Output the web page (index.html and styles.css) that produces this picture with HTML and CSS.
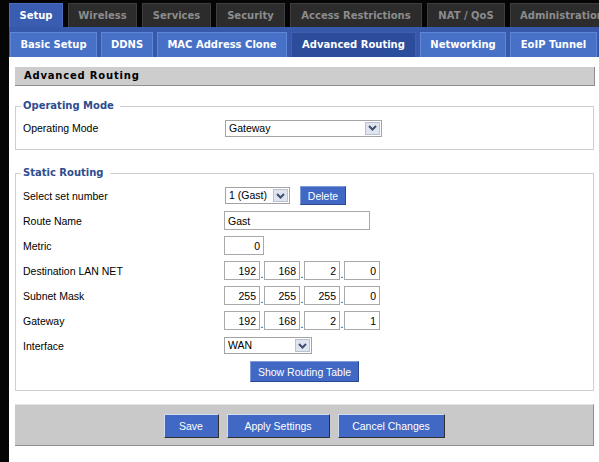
FILE: index.html
```html
<!DOCTYPE html>
<html>
<head>
<meta charset="utf-8">
<title>Advanced Routing</title>
<link rel="stylesheet" href="styles.css">
</head>
<body>
<div class="page">
  <nav class="tabs">
    <div class="tab active">Setup</div>
    <div class="tab">Wireless</div>
    <div class="tab">Services</div>
    <div class="tab">Security</div>
    <div class="tab">Access Restrictions</div>
    <div class="tab">NAT / QoS</div>
    <div class="tab">Administration</div>
  </nav>
  <nav class="subtabs">
    <div class="subtab">Basic Setup</div>
    <div class="subtab">DDNS</div>
    <div class="subtab">MAC Address Clone</div>
    <div class="subtab current">Advanced Routing</div>
    <div class="subtab">Networking</div>
    <div class="subtab">EoIP Tunnel</div>
  </nav>
  <main class="content">
    <div class="pagehead">Advanced Routing</div>

    <fieldset class="group group-mode">
      <legend>Operating Mode</legend>
      <div class="row">
        <div class="label">Operating Mode</div>
        <div class="field">
          <div class="select sel-mode"><span class="sel-text">Gateway</span><span class="sel-btn"><svg width="9" height="6" viewBox="0 0 9 6"><path d="M1 1 L4.5 4.5 L8 1" fill="none" stroke="#3d4f72" stroke-width="2"/></svg></span></div>
        </div>
      </div>
    </fieldset>

    <fieldset class="group group-static">
      <legend>Static Routing</legend>
      <div class="row">
        <div class="label">Select set number</div>
        <div class="field">
          <div class="select sel-set"><span class="sel-text">1 (Gast)</span><span class="sel-btn"><svg width="9" height="6" viewBox="0 0 9 6"><path d="M1 1 L4.5 4.5 L8 1" fill="none" stroke="#3d4f72" stroke-width="2"/></svg></span></div>
          <button class="btn btn-delete" type="button">Delete</button>
        </div>
      </div>
      <div class="row">
        <div class="label">Route Name</div>
        <div class="field"><input class="inp inp-name" type="text" value="Gast"></div>
      </div>
      <div class="row">
        <div class="label">Metric</div>
        <div class="field"><input class="inp inp-num inp-metric" type="text" value="0"></div>
      </div>
      <div class="row">
        <div class="label">Destination LAN NET</div>
        <div class="field ip">
          <input class="inp inp-num inp-ip" type="text" value="192"><span class="dot">.</span><input class="inp inp-num inp-ip" type="text" value="168"><span class="dot">.</span><input class="inp inp-num inp-ip" type="text" value="2"><span class="dot">.</span><input class="inp inp-num inp-ip" type="text" value="0">
        </div>
      </div>
      <div class="row">
        <div class="label">Subnet Mask</div>
        <div class="field ip">
          <input class="inp inp-num inp-ip" type="text" value="255"><span class="dot">.</span><input class="inp inp-num inp-ip" type="text" value="255"><span class="dot">.</span><input class="inp inp-num inp-ip" type="text" value="255"><span class="dot">.</span><input class="inp inp-num inp-ip" type="text" value="0">
        </div>
      </div>
      <div class="row">
        <div class="label">Gateway</div>
        <div class="field ip">
          <input class="inp inp-num inp-ip" type="text" value="192"><span class="dot">.</span><input class="inp inp-num inp-ip" type="text" value="168"><span class="dot">.</span><input class="inp inp-num inp-ip" type="text" value="2"><span class="dot">.</span><input class="inp inp-num inp-ip" type="text" value="1">
        </div>
      </div>
      <div class="row">
        <div class="label">Interface</div>
        <div class="field">
          <div class="select sel-if"><span class="sel-text">WAN</span><span class="sel-btn"><svg width="9" height="6" viewBox="0 0 9 6"><path d="M1 1 L4.5 4.5 L8 1" fill="none" stroke="#3d4f72" stroke-width="2"/></svg></span></div>
        </div>
      </div>
      <div class="center-row">
        <button class="btn btn-table" type="button">Show Routing Table</button>
      </div>
    </fieldset>

    <div class="actionbar">
      <button class="btn btn-action btn-save" type="button">Save</button>
      <button class="btn btn-action btn-apply" type="button">Apply Settings</button>
      <button class="btn btn-action btn-cancel" type="button">Cancel Changes</button>
    </div>
  </main>
</div>
</body>
</html>
```

FILE: styles.css
```css
* {
  box-sizing: border-box;
}

html, body {
  margin: 0;
  padding: 0;
  background: #050505;
  height: 100%;
}

body {
  font-family: "Liberation Sans", Arial, sans-serif;
  font-size: 10.5px;
  color: #000;
}

.page {
  margin-left: 9px;
  width: 590px;
  min-height: 462px;
  display: flex;
  flex-direction: column;
}

/* Top tabs */
.tabs {
  display: flex;
  align-items: flex-end;
  gap: 5px;
  height: 27px;
  white-space: nowrap;
  overflow: hidden;
}

.tab {
  flex: none;
  height: 24px;
  line-height: 23px;
  padding: 0 9px;
  text-align: center;
  font-family: "DejaVu Sans", Verdana, sans-serif;
  font-weight: bold;
  font-size: 10px;
  color: #8c8c8c;
  background: #2c2c2c;
  border: 1px solid #3e3e3e;
  border-bottom: none;
}

.tab:nth-child(1) { width: 54px; }
.tab:nth-child(2) { width: 69px; }
.tab:nth-child(3) { width: 69px; }
.tab:nth-child(4) { width: 69px; }
.tab:nth-child(5) { width: 132px; }
.tab:nth-child(6) { width: 78px; }
.tab:nth-child(7) { padding: 0 0 0 9px; text-align: left; }

.tab.active {
  background: #3a5db2;
  border-color: #4a6cc0;
  color: #fff;
}

/* Sub tabs */
.subtabs {
  display: flex;
  align-items: flex-end;
  gap: 4px;
  height: 30px;
  padding-left: 1px;
  background: #3859ab;
  white-space: nowrap;
  overflow: hidden;
}

.subtab {
  flex: none;
  height: 25px;
  line-height: 24px;
  padding: 0;
  text-align: center;
  font-family: "DejaVu Sans", Verdana, sans-serif;
  font-weight: bold;
  font-size: 10px;
  color: #fff;
  background: #4671c7;
  border: 1px solid #5f87d6;
  border-bottom: none;
}

.subtab:nth-child(1) { width: 87px; }
.subtab:nth-child(2) { width: 52px; }
.subtab:nth-child(3) { width: 130px; }
.subtab:nth-child(4) { width: 125px; }
.subtab:nth-child(5) { width: 86px; }
.subtab:nth-child(6) { width: 87px; }

.subtab.current {
  background: #2c4d9c;
  border-color: #3d5fae;
}

/* Content */
.content {
  flex: 1;
  background: #fff;
  padding: 10px 5px 15px 6px;
}

.pagehead {
  height: 19px;
  line-height: 18px;
  width: 580px;
  padding-left: 9px;
  background: #cdcdcd;
  border-right: 1px solid #8e8e8e;
  border-bottom: 1px solid #8e8e8e;
  font-family: "DejaVu Sans", Verdana, sans-serif;
  font-weight: bold;
  font-size: 10px;
  letter-spacing: 0.8px;
  color: #000;
}

.group {
  margin: 0;
  padding: 0 0 0 7px;
  border: 1px solid #cfcfcf;
  min-width: 0;
}

.group legend {
  margin-left: -2px;
  padding: 0 6px 0 2px;
  line-height: 14px;
  font-family: "DejaVu Sans", Verdana, sans-serif;
  font-weight: bold;
  font-size: 10px;
  color: #2e4c8f;
}

.group-mode {
  margin-top: 13px;
  padding-bottom: 11px;
}

.group-mode .row {
  margin-top: 5px;
  height: 20px;
}

.group-static {
  margin-top: 16px;
  padding-top: 3px;
  padding-bottom: 8px;
}

.row {
  display: grid;
  grid-template-columns: 201px 1fr;
  align-items: center;
  height: 25px;
}

.label {
  white-space: nowrap;
}

.field {
  display: flex;
  align-items: center;
}

/* Fake select */
.select {
  display: flex;
  align-items: stretch;
  height: 17px;
  border: 1px solid #a3a3a3;
  background: #fff;
}

.sel-text {
  flex: 1;
  padding-left: 3px;
  line-height: 15px;
  white-space: nowrap;
}

.sel-btn {
  flex: none;
  width: 15px;
  margin: 1px;
  display: flex;
  align-items: center;
  justify-content: center;
  background: #dfe4ee;
  border: 1px solid #b9c2d4;
}

.sel-mode {
  width: 157px;
  margin-left: 1px;
}

.sel-set {
  width: 65px;
  margin-left: 1px;
}

.sel-if {
  width: 88px;
}

/* Inputs */
.inp {
  height: 19px;
  border: 1px solid #a9a9a9;
  padding: 0 3px;
  font-family: "Liberation Sans", Arial, sans-serif;
  font-size: 10.5px;
  color: #000;
  background: #fff;
  margin: 0;
  outline: none;
}

.inp-num {
  text-align: right;
}

.inp-name {
  width: 146px;
}

.inp-metric {
  width: 40px;
}

.inp-ip {
  width: 36px;
}

.dot {
  width: 4px;
  align-self: flex-end;
  line-height: 12px;
  text-align: center;
}

/* Buttons */
.btn {
  font-family: "Liberation Sans", Arial, sans-serif;
  font-size: 10.5px;
  color: #fff;
  background: #4068c4;
  border: 1px solid;
  border-color: #7e9ad8 #2a4890 #2a4890 #7e9ad8;
  margin: 0;
  cursor: pointer;
}

.btn-delete {
  margin-left: 10px;
  height: 19px;
  width: 46px;
  padding: 0;
}

.center-row {
  display: flex;
  justify-content: center;
  margin-top: 3px;
  padding-right: 7px;
}

.btn-table {
  height: 21px;
  width: 109px;
  padding: 0;
}

.actionbar {
  margin-top: 13px;
  height: 42px;
  display: flex;
  justify-content: center;
  align-items: flex-start;
  gap: 8px;
  padding-top: 9px;
  background: #c9c9c9;
  border-top: 1px solid #e2e2e2;
  border-bottom: 1px solid #8f8f8f;
  border-right: 1px solid #8f8f8f;
}

.btn-action {
  height: 24px;
  padding: 0;
  border-color: #d4dcef #303030 #303030 #d4dcef;
}

.btn-save {
  width: 55px;
}

.btn-apply {
  width: 103px;
}

.btn-cancel {
  width: 107px;
}
```
